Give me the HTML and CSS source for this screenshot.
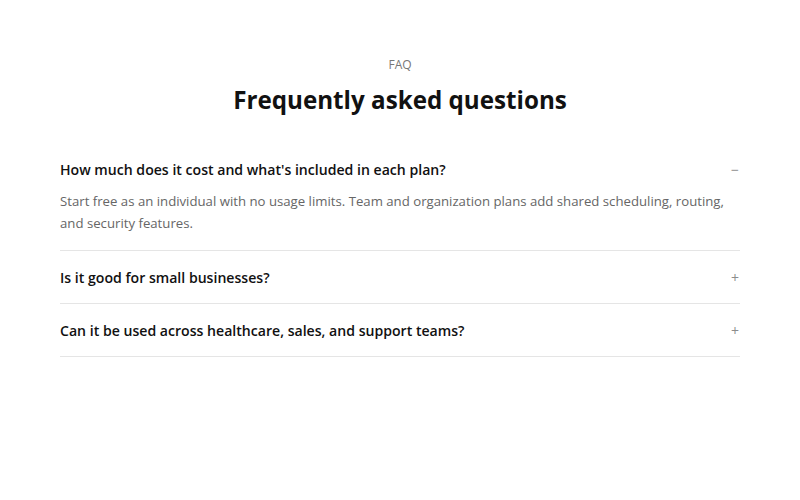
FILE: index.html
```html
<!DOCTYPE html>
<html lang="en">
<head>
<meta charset="utf-8">
<title>FAQ</title>
<link rel="stylesheet" href="styles.css">
</head>
<body>
<section class="faq">
  <p class="eyebrow">FAQ</p>
  <h1 class="title">Frequently asked questions</h1>
  <div class="list">
    <div class="item open">
      <div class="question"><span class="q-text">How much does it cost and what's included in each plan?</span><span class="sign">&minus;</span></div>
      <p class="answer">Start free as an individual with no usage limits. Team and organization plans add shared scheduling, routing, and security features.</p>
    </div>
    <div class="item">
      <div class="question"><span class="q-text">Is it good for small businesses?</span><span class="sign">+</span></div>
    </div>
    <div class="item">
      <div class="question"><span class="q-text">Can it be used across healthcare, sales, and support teams?</span><span class="sign">+</span></div>
    </div>
  </div>
</section>
</body>
</html>
```
FILE: styles.css
```css
* { box-sizing: border-box; }
html, body { margin: 0; padding: 0; background: #fff; }
body { font-family: "Open Sans", "Noto Sans", sans-serif; color: #111; }
.faq { width: 680px; margin: 0 auto; padding-top: 57px; }
.eyebrow { margin: 0; text-align: center; font-size: 12px; line-height: 16px; color: #777; font-weight: 500; }
.title { margin: 9px 0 0; text-align: center; font-size: 24.2px; line-height: 36px; font-weight: 700; color: #111; }
.list { margin-top: 25px; }
.item { border-bottom: 1px solid #e5e5e5; }
.question { display: flex; justify-content: space-between; align-items: center; padding: 18px 0 17px; font-size: 14.1px; line-height: 17px; font-weight: 600; }
.sign { color: #8c8c8c; font-size: 14px; font-weight: 400; padding-right: 1px; }
.answer { margin: -5px 0 0; padding: 0 0 16px; font-size: 13.2px; line-height: 22px; color: #666; }
```
